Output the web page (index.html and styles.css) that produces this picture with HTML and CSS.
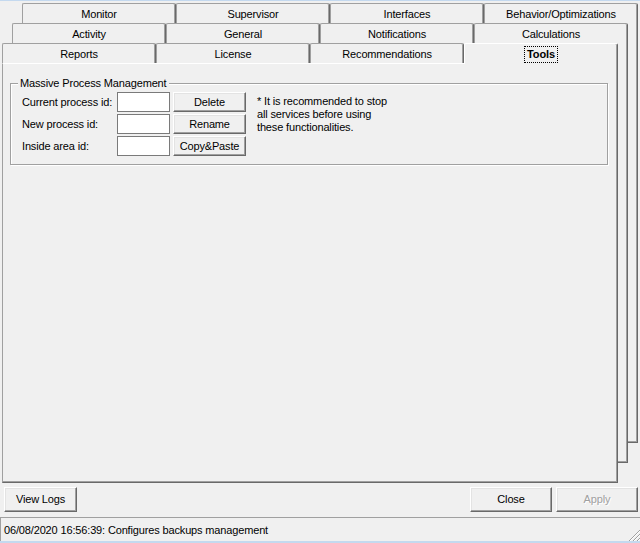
FILE: index.html
```html
<!DOCTYPE html>
<html>
<head>
<meta charset="utf-8">
<link rel="stylesheet" href="styles.css">
</head>
<body>
<div class="window">
  <div class="deck">
    <div class="sheet s1">
      <div class="tabrow">
        <div class="tab">Monitor</div>
        <div class="tab">Supervisor</div>
        <div class="tab">Interfaces</div>
        <div class="tab">Behavior/Optimizations</div>
      </div>
      <div class="body"></div>
    </div>
    <div class="sheet s2">
      <div class="tabrow">
        <div class="tab">Activity</div>
        <div class="tab">General</div>
        <div class="tab">Notifications</div>
        <div class="tab">Calculations</div>
      </div>
      <div class="body"></div>
    </div>
    <div class="sheet s3">
      <div class="tabrow">
        <div class="tab">Reports</div>
        <div class="tab">License</div>
        <div class="tab">Recommendations</div>
        <div class="tab active"><span class="focus">Tools</span></div>
      </div>
      <div class="body main">
        <div class="group">
          <div class="legend">Massive Process Management</div>
          <div class="gbody">
            <div class="fields">
              <span class="lbl">Current process id:</span>
              <input class="inp" type="text">
              <button class="btn">Delete</button>
              <span class="lbl">New process id:</span>
              <input class="inp" type="text">
              <button class="btn">Rename</button>
              <span class="lbl">Inside area id:</span>
              <input class="inp" type="text">
              <button class="btn">Copy&amp;Paste</button>
            </div>
            <div class="note">* It is recommended to stop<br>all services before using<br>these functionalities.</div>
          </div>
        </div>
      </div>
    </div>
  </div>
  <div class="actions">
    <button class="btn logs">View Logs</button>
    <div class="spacer"></div>
    <button class="btn wide">Close</button>
    <button class="btn wide disabled">Apply</button>
  </div>
  <div class="status">
    <span class="stext">06/08/2020 16:56:39: Configures backups management</span>
    <svg class="grip" width="12" height="12" viewBox="0 0 12 12">
      <line x1="12" y1="1" x2="1" y2="12" stroke="#a0a0a0" stroke-width="1"/>
      <line x1="12" y1="2" x2="2" y2="12" stroke="#ffffff" stroke-width="1"/>
      <line x1="12" y1="5" x2="5" y2="12" stroke="#a0a0a0" stroke-width="1"/>
      <line x1="12" y1="6" x2="6" y2="12" stroke="#ffffff" stroke-width="1"/>
      <line x1="12" y1="9" x2="9" y2="12" stroke="#a0a0a0" stroke-width="1"/>
      <line x1="12" y1="10" x2="10" y2="12" stroke="#ffffff" stroke-width="1"/>
    </svg>
  </div>
</div>
</body>
</html>
```
FILE: styles.css
```css
* { box-sizing: border-box; }
html, body { margin: 0; padding: 0; }
body {
  width: 640px;
  height: 543px;
  overflow: hidden;
  background: #f0f0f0;
  font-family: "Liberation Sans", Arial, sans-serif;
  font-size: 11px;
  letter-spacing: -0.15px;
  color: #000;
}
.window {
  height: 543px;
  border-top: 1px solid #c4d9ef;
  border-bottom: 2px solid #c4d9ef;
  display: flex;
  flex-direction: column;
}
.deck {
  display: grid;
  margin-top: 2px;
  height: 480px;
}
.sheet {
  grid-area: 1 / 1;
  align-self: start;
  width: 616px;
  display: flex;
  flex-direction: column;
}
.s1 { margin-left: 22px; }
.s2 { margin-left: 12px; margin-top: 20px; }
.s3 { margin-left: 2px; margin-top: 40px; }
.tabrow { display: flex; height: 20px; }
.tab {
  width: 154px;
  height: 20px;
  padding-top: 1px;
  background: #f0f0f0;
  border: 1px solid #a0a0a0;
  border-bottom: none;
  border-right-color: #696969;
  box-shadow: inset -1px 0 #a0a0a0;
  border-radius: 2px 2px 0 0;
  display: flex;
  align-items: center;
  justify-content: center;
  line-height: 13px;
}
.tab.active {
  height: 21px;
  padding-top: 0;
  margin-bottom: -1px;
  border-left-color: #fff;
  border-top-color: #fff;
  font-weight: bold;
  position: relative;
  z-index: 1;
}
.focus {
  outline: 1px dotted #000;
  padding: 1px 2px;
  line-height: 13px;
}
.body {
  height: 420px;
  background: #f0f0f0;
  border-right: 1px solid #696969;
  border-bottom: 1px solid #696969;
  box-shadow: inset -1px -1px #a0a0a0;
}
.main {
  border-top: 1px solid #fff;
  border-left: 1px solid #a0a0a0;
  padding: 19px 9px 0 7px;
}
.group {
  border: 1px solid #a0a0a0;
  box-shadow: inset 1px 1px #fff, 1px 1px #fff;
  padding: 0 0 8px 7px;
}
.legend {
  margin-top: -7px;
  padding: 0 2px;
  width: fit-content;
  background: #f0f0f0;
  line-height: 13px;
}
.gbody {
  display: flex;
  margin: 2px 0 0 4px;
}
.fields {
  display: grid;
  grid-template-columns: 95px 56px 73px;
  grid-auto-rows: 20px;
  row-gap: 2px;
  align-items: center;
}
.lbl { line-height: 13px; }
.inp {
  width: 53px;
  height: 20px;
  margin: 0;
  padding: 0 2px;
  background: #fff;
  border: 1px solid #7a7a7a;
  font: inherit;
  outline: none;
}
.btn {
  font: inherit;
  letter-spacing: inherit;
  color: #000;
  margin: 0;
  padding: 0;
  height: 20px;
  background: #f0f0f0;
  border: 1px solid;
  border-color: #fff #696969 #696969 #fff;
  box-shadow: inset -1px -1px #a0a0a0, inset 1px 1px #e3e3e3;
  line-height: 13px;
}
.note {
  margin: 3px 0 0 11px;
  line-height: 13px;
}
.actions {
  display: flex;
  margin-top: 4px;
  height: 25px;
  padding: 0 2px 0 4px;
  gap: 4px;
}
.actions .btn { height: 25px; }
.logs { width: 73px; }
.spacer { flex: 1; }
.wide { width: 82px; }
.disabled { color: #a0a0a0; text-shadow: 1px 1px #fff; }
.status {
  margin-top: 5px;
  flex: 1;
  display: flex;
  align-items: center;
  border-top: 1px solid #a0a0a0;
  border-left: 1px solid #a0a0a0;
  padding-left: 3px;
  padding-top: 1px;
}
.stext { line-height: 13px; }
.grip {
  margin-left: auto;
  align-self: flex-end;
  display: block;
}
```
